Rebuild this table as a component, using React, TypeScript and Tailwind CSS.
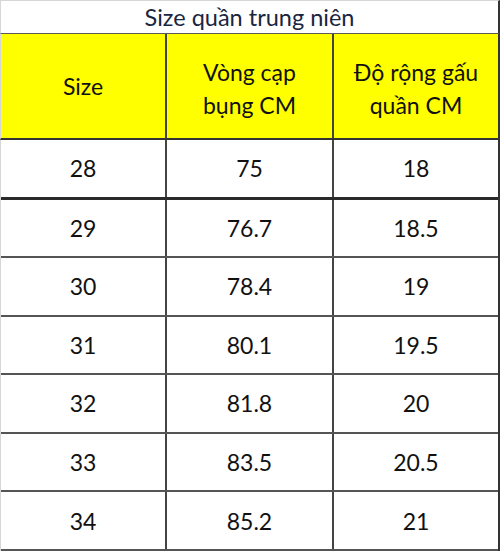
const rows = [
  ['28', '75', '18'],
  ['29', '76.7', '18.5'],
  ['30', '78.4', '19'],
  ['31', '80.1', '19.5'],
  ['32', '81.8', '20'],
  ['33', '83.5', '20.5'],
  ['34', '85.2', '21'],
];

export default function App() {
  return (
    <div
      className="w-[500px] h-[551px] bg-white flex flex-col text-[#111] overflow-hidden"
      style={{ fontFamily: 'Lato, "Noto Sans", sans-serif' }}
    >
      <div className="h-[34px] shrink-0 flex items-center justify-center pt-[2px] border-t border-l border-[#d6d6d6] border-b border-b-[#5a5a5a] border-r-2 border-r-[#333] text-[23.5px] text-[#1a2540]">
        Size quần trung niên
      </div>

      <div className="h-[106px] shrink-0 grid grid-cols-[166px_167px_1fr] bg-[#ffff00] border-b-2 border-[#333] border-l border-l-[#d6d6d6] border-r-2 border-r-[#333] text-[23px] leading-[33px] text-center">
        <div className="flex items-center justify-center border-r-2 border-[#444]">Size</div>
        <div className="flex items-center justify-center pt-[6px] border-r-2 border-[#444]">
          Vòng cạp
          <br />
          bụng CM
        </div>
        <div className="flex items-center justify-center pt-[6px]">
          Độ rộng gấu
          <br />
          quần CM
        </div>
      </div>

      <div className="flex-1 flex flex-col border-l border-[#d6d6d6] border-r-2 border-r-[#333]">
        {rows.map((r, i) => (
          <div
            key={r[0]}
            className={
              i === 0
                ? 'flex-1 grid grid-cols-[166px_167px_1fr] text-[23px] border-b-[3px] border-[#2a2a2a]'
                : 'flex-1 grid grid-cols-[166px_167px_1fr] text-[23px] border-b-2 border-[#555]'
            }
          >
            <div className="flex items-center justify-center border-r-2 border-[#444]">{r[0]}</div>
            <div className="flex items-center justify-center border-r-2 border-[#444]">{r[1]}</div>
            <div className="flex items-center justify-center">{r[2]}</div>
          </div>
        ))}
      </div>
    </div>
  );
}
